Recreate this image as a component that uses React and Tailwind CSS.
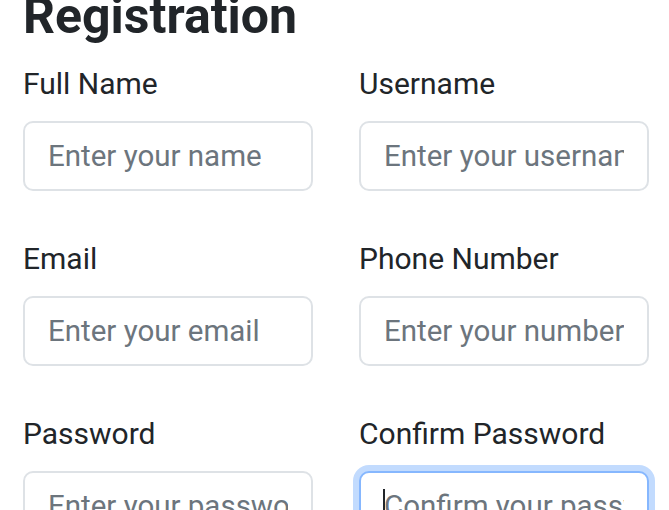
import { useState } from 'react';

const fields = [
  { id: 'name', label: 'Full Name', placeholder: 'Enter your name', type: 'text' },
  { id: 'username', label: 'Username', placeholder: 'Enter your username', type: 'text' },
  { id: 'email', label: 'Email', placeholder: 'Enter your email', type: 'email' },
  { id: 'phone', label: 'Phone Number', placeholder: 'Enter your number', type: 'tel' },
  { id: 'password', label: 'Password', placeholder: 'Enter your password', type: 'password' },
  { id: 'confirm', label: 'Confirm Password', placeholder: 'Confirm your password', type: 'password', focused: true },
];

export default function App() {
  const [values, setValues] = useState({});

  return (
    <div className="min-h-screen bg-white px-[23px] font-['Roboto',sans-serif] text-[#212529] overflow-hidden h-[510px]">
      <h1 className="mt-[-14px] mb-[15px] text-[50px] leading-[1.2] font-bold">Registration</h1>

      <form className="grid grid-cols-[290px_290px] gap-x-[46px] gap-y-[45px]">
        {fields.map((f) => (
          <div key={f.id} className="flex flex-col">
            <label htmlFor={f.id} className="mb-[15px] text-[30px] leading-[1.5]">
              {f.label}
            </label>
            <div className="relative">
              <input
                id={f.id}
                type={f.type === 'password' ? 'text' : f.type}
                placeholder={f.placeholder}
                value={values[f.id] || ''}
                onChange={(e) => setValues({ ...values, [f.id]: e.target.value })}
                className={`block w-full h-[70px] px-[23px] rounded-[10px] border-2 bg-white text-[29.5px] outline-none placeholder:text-[#6c757d] ${
                  f.focused
                    ? 'border-[#86b7fe] shadow-[0_0_0_6px_#c2dbfe]'
                    : 'border-[#dee2e6]'
                }`}
              />
              {f.focused && (
                <span className="absolute left-[24px] top-[18px] h-[36px] w-[2px] bg-[#212529]" />
              )}
            </div>
          </div>
        ))}
      </form>
    </div>
  );
}
